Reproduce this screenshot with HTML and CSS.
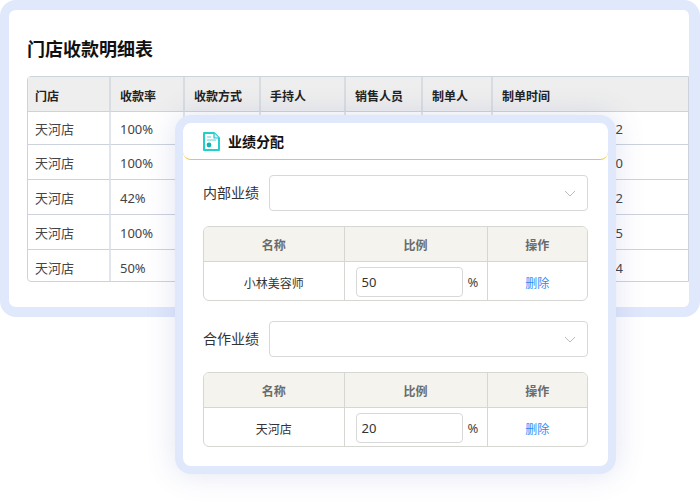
FILE: index.html
```html
<!DOCTYPE html>
<html lang="zh-CN">
<head>
    <meta charset="UTF-8">
    <meta name="viewport" content="width=device-width, initial-scale=1.0">
    <title>门店收款明细表</title>
    <link rel="stylesheet" href="styles.css">
</head>
<body>
    <div class="sheet">
        <h1>门店收款明细表</h1>
        <table class="detail">
            <colgroup>
                <col class="c-store"><col class="c-rate"><col class="c-way"><col class="c-holder">
                <col class="c-sales"><col class="c-maker"><col class="c-time">
            </colgroup>
            <thead>
                <tr><th>门店</th><th>收款率</th><th>收款方式</th><th>手持人</th><th>销售人员</th><th>制单人</th><th>制单时间</th></tr>
            </thead>
            <tbody>
                <tr><td>天河店</td><td>100%</td><td>现金</td><td>小林</td><td>小林</td><td>小林</td><td>2021-06-12 12:12:12</td></tr>
                <tr><td>天河店</td><td>100%</td><td>现金</td><td>小林</td><td>小林</td><td>小林</td><td>2021-06-12 12:12:10</td></tr>
                <tr><td>天河店</td><td>42%</td><td>现金</td><td>小林</td><td>小林</td><td>小林</td><td>2021-06-12 12:12:12</td></tr>
                <tr><td>天河店</td><td>100%</td><td>现金</td><td>小林</td><td>小林</td><td>小林</td><td>2021-06-12 12:12:15</td></tr>
                <tr><td>天河店</td><td>50%</td><td>现金</td><td>小林</td><td>小林</td><td>小林</td><td>2021-06-12 12:12:14</td></tr>
            </tbody>
        </table>
    </div>

    <div class="modal">
        <div class="modal-head">
            <svg class="doc-icon" width="17" height="19" viewBox="0 0 17 19">
                <path d="M1 1h10l5 5v12H1z" fill="#fff" stroke="#22cfc9" stroke-width="2" stroke-linejoin="round"/>
                <path d="M11 1v5h5" fill="#d5f6f5" stroke="#1fc6d6" stroke-width="1.2"/>
                <path d="M4 5h4M4 8h9" stroke="#4bd8d4" stroke-width="1.2"/>
                <circle cx="6" cy="13" r="2.4" fill="#12b3b3"/>
            </svg>
            <span>业绩分配</span>
        </div>
        <div class="modal-body">
            <div class="field">
                <label>内部业绩</label>
                <div class="select">
                    <svg width="12" height="7" viewBox="0 0 12 7"><path d="M1 1l5 5 5-5" fill="none" stroke="#bbb" stroke-width="1"/></svg>
                </div>
            </div>
            <div class="split-wrap">
                <table class="split">
                    <colgroup><col class="c-name"><col class="c-ratio"><col class="c-op"></colgroup>
                    <thead><tr><th>名称</th><th>比例</th><th>操作</th></tr></thead>
                    <tbody>
                        <tr>
                            <td>小林美容师</td>
                            <td><div class="ratio"><div class="num">50</div><span>%</span></div></td>
                            <td><a class="del">删除</a></td>
                        </tr>
                    </tbody>
                </table>
            </div>
            <div class="field">
                <label>合作业绩</label>
                <div class="select">
                    <svg width="12" height="7" viewBox="0 0 12 7"><path d="M1 1l5 5 5-5" fill="none" stroke="#bbb" stroke-width="1"/></svg>
                </div>
            </div>
            <div class="split-wrap">
                <table class="split">
                    <colgroup><col class="c-name"><col class="c-ratio"><col class="c-op"></colgroup>
                    <thead><tr><th>名称</th><th>比例</th><th>操作</th></tr></thead>
                    <tbody>
                        <tr>
                            <td>天河店</td>
                            <td><div class="ratio"><div class="num">20</div><span>%</span></div></td>
                            <td><a class="del">删除</a></td>
                        </tr>
                    </tbody>
                </table>
            </div>
        </div>
    </div>
</body>
</html>
```

FILE: styles.css
```css
* {
    box-sizing: border-box;
}

body {
    margin: 0;
    width: 700px;
    height: 504px;
    overflow: hidden;
    position: relative;
    background: #fff;
    color: #333;
    font-family: "Noto Sans", "Noto Sans CJK SC", sans-serif;
    font-size: 13px;
}

.sheet {
    width: 700px;
    height: 317px;
    border: solid #e0e8fc;
    border-width: 10px 11px 10px 9px;
    border-radius: 16px;
    padding: 26px 0 0 18px;
    background: #fff;
    background-clip: padding-box;
}

h1 {
    margin: 0 0 13px;
    height: 27px;
    line-height: 27px;
    font-size: 18px;
    font-weight: 700;
    color: #111;
}

.detail {
    width: 662px;
    table-layout: fixed;
    border-collapse: separate;
    border-spacing: 0;
    border: 1px solid #ccd3dc;
    border-radius: 4px 0 0 4px;
}

.c-store { width: 83px; }
.c-rate { width: 74px; }
.c-way { width: 76px; }
.c-holder { width: 85px; }
.c-sales { width: 77px; }
.c-maker { width: 70px; }

.detail th {
    height: 35px;
    padding: 4px 0 0 9px;
    background: #eeeeee;
    border-bottom: 1px solid #ccd3dc;
    border-right: 2px solid #d8dde3;
    text-align: left;
    font-size: 12px;
    font-weight: 700;
    color: #222;
}

.detail td {
    height: 35px;
    padding: 9px 0 0 9px;
    vertical-align: top;
    line-height: 18px;
    border-bottom: 1px solid #ccd3dc;
    border-right: 2px solid #e2e6ec;
    font-size: 13px;
    color: #444;
    white-space: nowrap;
}

.detail th:first-child,
.detail td:first-child {
    padding-left: 7px;
}

.detail th:last-child,
.detail td:last-child {
    border-right: none;
}

.detail td:last-child {
    padding-left: 7px;
}

.detail tr:first-child td {
    height: 33px;
    padding-top: 8px;
}

.detail tr:last-child td {
    height: 31px;
    border-bottom: none;
}

.modal {
    position: absolute;
    left: 175px;
    top: 115px;
    width: 441px;
    height: 359px;
    border: 8px solid #e0e8fc;
    border-radius: 16px;
    background: #fff;
    background-clip: padding-box;
    box-shadow: 0 0 30px rgba(70, 90, 170, 0.16);
}

.modal-head {
    height: 37px;
    display: flex;
    align-items: center;
    gap: 8px;
    padding-left: 20px;
    border-bottom: 1px solid #f5c52c;
    border-radius: 8px;
    font-size: 14px;
    font-weight: 700;
    color: #111;
}

.modal-body {
    padding: 15px 20px 0;
}

.field {
    display: flex;
    align-items: center;
    gap: 10px;
    margin-bottom: 15px;
}

.field label {
    width: 56px;
    padding-bottom: 2px;
    font-size: 14px;
    color: #333;
}

.select {
    flex: 1;
    height: 36px;
    border: 1px solid #d8d8d8;
    border-radius: 4px;
    display: flex;
    align-items: center;
    justify-content: flex-end;
    padding-right: 11px;
}

.split-wrap {
    border: 1px solid #d6d6d3;
    border-radius: 6px;
    overflow: hidden;
    margin-bottom: 20px;
}

.split {
    width: 100%;
    table-layout: fixed;
    border-collapse: collapse;
}

.c-name { width: 140px; }
.c-ratio { width: 143px; }

.split th {
    height: 34px;
    padding-top: 4px;
    background: #f4f3ed;
    border-bottom: 1px solid #d6d6d3;
    border-right: 1px solid #d6d6d3;
    font-size: 12px;
    font-weight: 700;
    color: #6b6b6b;
}

.split td {
    height: 39px;
    padding: 4px 0 0;
    border-right: 1px solid #d6d6d3;
    text-align: center;
    font-size: 12px;
    color: #333;
}

.split th:last-child,
.split td:last-child {
    border-right: none;
}

.ratio {
    display: flex;
    align-items: center;
    gap: 5px;
    margin-top: -2px;
    padding-left: 11px;
}

.ratio span {
    font-size: 13px;
    color: #444;
}

.num {
    width: 107px;
    height: 30px;
    line-height: 29px;
    border: 1px solid #d8d8d8;
    border-radius: 4px;
    padding-left: 5px;
    text-align: left;
    font-size: 13px;
    color: #333;
}

.del {
    color: #2f8cf5;
    font-size: 12px;
}
```
